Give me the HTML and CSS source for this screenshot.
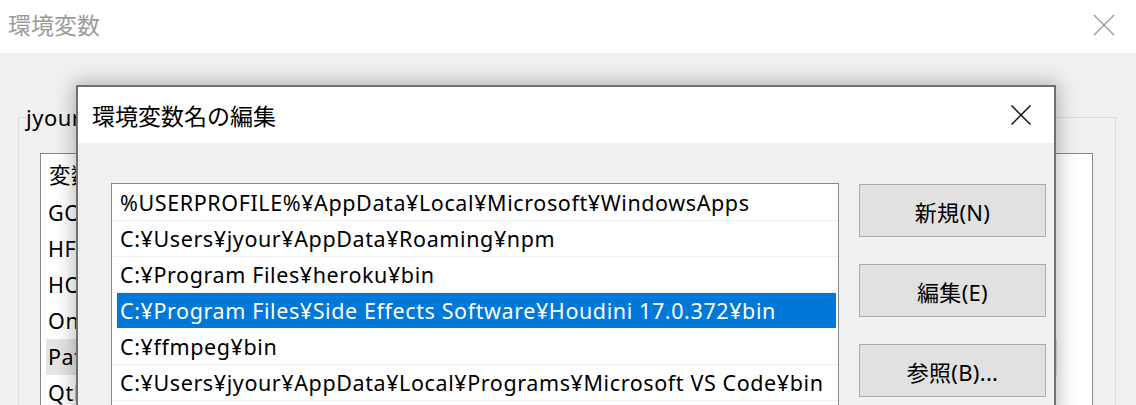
FILE: index.html
```html
<!DOCTYPE html>
<html lang="ja">
<head>
<meta charset="utf-8">
<title>環境変数名の編集</title>
<link rel="stylesheet" href="styles.css">
</head>
<body>
<div class="bg-win">
  <div class="bg-titlebar">
    <span class="bg-title">環境変数</span>
    <svg class="bg-close" width="22" height="22" viewBox="0 0 22 22"><path d="M1 1L21 21M21 1L1 21" stroke="#9a9a9a" stroke-width="1.4" fill="none"/></svg>
  </div>
  <div class="bg-body">
    <fieldset class="group">
      <legend class="group-label">jyour のユーザー環境変数(U)</legend>
      <div class="var-list">
        <div class="var-head">変数</div>
        <div class="var-row">GOPATH</div>
        <div class="var-row">HFS</div>
        <div class="var-row">HOUDINI_PATH</div>
        <div class="var-row">OneDrive</div>
        <div class="var-row var-row-sel">Path</div>
        <div class="var-row">QtDIR</div>
      </div>
    </fieldset>
  </div>
</div>

<div class="dialog">
  <div class="dlg-titlebar">
    <span class="dlg-title">環境変数名の編集</span>
    <svg class="dlg-close" width="20" height="20" viewBox="0 0 20 20"><path d="M0.5 0.5L19.5 19.5M19.5 0.5L0.5 19.5" stroke="#111" stroke-width="1.5" fill="none"/></svg>
  </div>
  <div class="dlg-body">
    <div class="path-list">
      <div class="path-row">%USERPROFILE%¥AppData¥Local¥Microsoft¥WindowsApps</div>
      <div class="path-row">C:¥Users¥jyour¥AppData¥Roaming¥npm</div>
      <div class="path-row">C:¥Program Files¥heroku¥bin</div>
      <div class="path-row path-row-sel">C:¥Program Files¥Side Effects Software¥Houdini 17.0.372¥bin</div>
      <div class="path-row">C:¥ffmpeg¥bin</div>
      <div class="path-row">C:¥Users¥jyour¥AppData¥Local¥Programs¥Microsoft VS Code¥bin</div>
    </div>
    <div class="btn-col">
      <button class="btn">新規(N)</button>
      <button class="btn">編集(E)</button>
      <button class="btn">参照(B)...</button>
    </div>
  </div>
</div>
</body>
</html>
```

FILE: styles.css
```css
* { box-sizing: border-box; }

html, body {
  margin: 0;
  padding: 0;
}

body {
  width: 1136px;
  height: 405px;
  overflow: hidden;
  position: relative;
  background: #f0f0f0;
  font-family: "Noto Sans", "Noto Sans CJK JP", sans-serif;
  color: #000;
}

/* background window */
.bg-win {
  height: 405px;
  overflow: hidden;
  display: flex;
  flex-direction: column;
}

.bg-titlebar {
  height: 53px;
  flex: none;
  background: #fff;
  display: flex;
  align-items: center;
  justify-content: space-between;
  padding: 0 21px 6px 8px;
}

.bg-title {
  font-family: "Noto Sans CJK JP", sans-serif;
  font-size: 23px;
  line-height: 30px;
  color: #9c9c9c;
}

.bg-close {
  display: block;
  margin-top: 3px;
}

.bg-body {
  flex: 1;
  min-height: 0;
  overflow: hidden;
  background: #f0f0f0;
}

.group {
  margin: 51px 20px 0 18px;
  padding: 0 22px 0 7px;
  border: 1px solid #dcdcdc;
  height: 330px;
  min-width: 0;
}

.group-label {
  padding: 0;
  font-size: 22px;
  line-height: 26px;
  letter-spacing: 0.5px;
}

.var-list {
  margin: 23px 0 0 14px;
  background: #fff;
  border: 1px solid #828790;
  height: 280px;
  font-size: 21.5px;
  letter-spacing: 0.6px;
  overflow: hidden;
}

.var-head {
  height: 41px;
  line-height: 41px;
  padding-left: 8px;
}

.var-row {
  height: 36px;
  line-height: 36px;
  margin-left: 5px;
  padding-left: 2px;
  white-space: nowrap;
}

.var-row-sel {
  background: #e5e5e5;
  margin-right: 35px;
}

/* dialog window */
.dialog {
  position: absolute;
  left: 76px;
  top: 85px;
  width: 980px;
  height: 330px;
  border: 2px solid #707070;
  border-bottom: none;
  background: #f0f0f0;
  box-shadow: 0 0 18px 2px rgba(0, 0, 0, 0.28);
  display: flex;
  flex-direction: column;
  overflow: hidden;
}

.dlg-titlebar {
  height: 56px;
  flex: none;
  background: #fff;
  display: flex;
  align-items: center;
  justify-content: space-between;
  padding: 0 23px 0 14px;
}

.dlg-title {
  font-family: "Noto Sans CJK JP", sans-serif;
  font-size: 23px;
  line-height: 30px;
}

.dlg-close {
  display: block;
}

.dlg-body {
  display: flex;
  align-items: flex-start;
  gap: 20px;
  padding: 40px 0 0 33px;
}

.path-list {
  width: 728px;
  height: 260px;
  flex: none;
  background: #fff;
  border: 1px solid #828790;
  padding-top: 1px;
  font-size: 21.5px;
  letter-spacing: 0.6px;
  overflow: hidden;
}

.path-row {
  height: 36px;
  line-height: 35px;
  padding-left: 7px;
  margin-left: 1px;
  border-bottom: 1px solid #f0f0f0;
  white-space: nowrap;
}

.path-row-sel {
  margin: 0 2px 0 5px;
  padding-left: 3px;
  background: #0078d7;
  color: #fff;
  border-bottom-color: #fff;
}

.btn-col {
  display: flex;
  flex-direction: column;
  gap: 27px;
  margin-top: 1px;
}

.btn {
  width: 187px;
  height: 53px;
  background: #e1e1e1;
  border: 1px solid #adadad;
  font-family: inherit;
  font-size: 22px;
  letter-spacing: 0.3px;
  color: #000;
  padding: 0;
  margin: 0;
}
```
